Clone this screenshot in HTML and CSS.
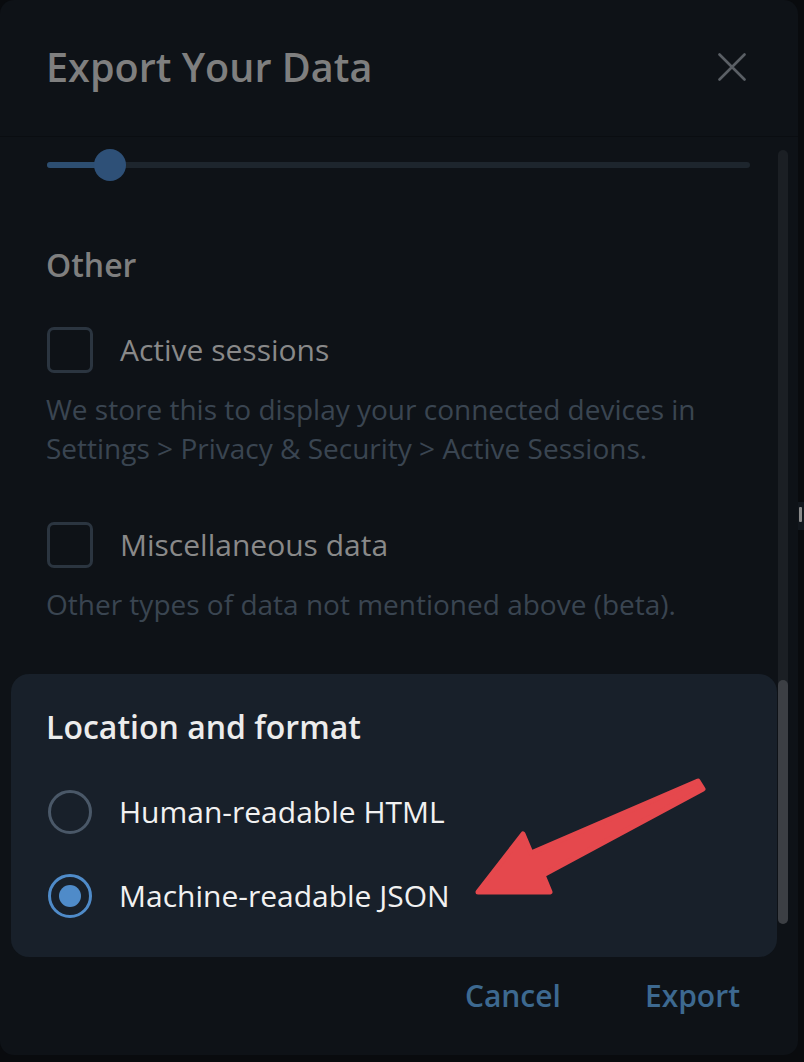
FILE: index.html
```html
<!DOCTYPE html>
<html>
<head>
<meta charset="utf-8">
<link rel="stylesheet" href="styles.css">
</head>
<body>
<div class="dialog">
  <header class="header">
    <h1 class="title">Export Your Data</h1>
    <svg class="close" width="28" height="28" viewBox="0 0 28 28"><path d="M1.5 1.5 L26.5 26.5 M26.5 1.5 L1.5 26.5" stroke="#5a5f65" stroke-width="2.6" stroke-linecap="round" fill="none"/></svg>
  </header>
  <div class="scroll">
    <div class="content">
      <div class="slider"><div class="track"><div class="fill"></div><div class="thumb"></div></div></div>
      <h2 class="section">Other</h2>
      <div class="check-row"><span class="checkbox"></span><span class="check-label">Active sessions</span></div>
      <p class="desc">We store this to display your connected devices in<br>Settings &gt; Privacy &amp; Security &gt; Active Sessions.</p>
      <div class="check-row second"><span class="checkbox"></span><span class="check-label">Miscellaneous data</span></div>
      <p class="desc">Other types of data not mentioned above (beta).</p>
      <div class="card">
        <h2 class="card-title">Location and format</h2>
        <div class="radio-row"><span class="radio"></span><span class="radio-label">Human-readable HTML</span></div>
        <div class="radio-row checked"><span class="radio"><span class="dot"></span></span><span class="radio-label">Machine-readable JSON</span></div>
      </div>
    </div>
    <div class="scrollbar"><div class="scroll-thumb"></div></div>
  </div>
  <footer class="footer">
    <span class="btn">Cancel</span>
    <span class="btn">Export</span>
  </footer>
  <svg class="arrow" width="804" height="1062" viewBox="0 0 804 1062"><polygon points="478,892 523,834 531,853 698,781 703,789 543,875 550,892" fill="#e5484d" stroke="#e5484d" stroke-width="5" stroke-linejoin="round"/></svg>
</div>
<div class="peek"><span></span></div>
</body>
</html>
```
FILE: styles.css
```css
* { box-sizing: border-box; }
html, body { margin: 0; padding: 0; }
body {
  background: #090b0e;
  width: 804px;
  height: 1062px;
  overflow: hidden;
  font-family: "Open Sans", "Noto Sans", sans-serif;
  position: relative;
}
.dialog {
  position: relative;
  width: 798px;
  height: 1055px;
  background: #0e1217;
  border-radius: 14px;
  display: flex;
  flex-direction: column;
}
.header {
  height: 137px;
  flex: none;
  border-bottom: 1px solid #0a0d11;
  display: flex;
  align-items: flex-start;
  justify-content: space-between;
  padding: 43px 52px 0 46px;
}
.title {
  margin: 0;
  font-size: 39.6px;
  line-height: 48px;
  font-weight: 600;
  color: #7f7f7f;
}
.close { margin-top: 10px; }
.scroll { position: relative; flex: none; }
.slider { padding: 12px 48px 0 47px; height: 44px; }
.track {
  position: relative;
  height: 6px;
  margin-top: 13px;
  background: #1d252d;
  border-radius: 3px;
}
.fill {
  position: absolute;
  left: 0; top: 0;
  width: 63px; height: 6px;
  background: #2d4e71;
  border-radius: 3px;
}
.thumb {
  position: absolute;
  left: 47px; top: -13px;
  width: 32px; height: 32px;
  border-radius: 50%;
  background: #2e5077;
}
.section {
  margin: 64px 0 0 46px;
  font-size: 32px;
  line-height: 40px;
  font-weight: 600;
  color: #7f7f7f;
}
.check-row {
  display: flex;
  align-items: center;
  margin: 42px 0 0 47px;
  height: 46px;
}
.check-row.second { margin-top: 55px; }
.checkbox {
  width: 46px; height: 46px;
  border: 3px solid #2b3540;
  border-radius: 7px;
  flex: none;
}
.check-label {
  margin-left: 27px;
  font-size: 30px;
  line-height: 40px;
  color: #898989;
}
.desc {
  margin: 17px 0 0 46px;
  font-size: 28px;
  line-height: 38.5px;
  color: #3a4551;
}
.card {
  margin: 50px 21px 0 11px;
  background: #18202a;
  border-radius: 18px;
  padding: 33px 36px 39px 35px;
}
.card-title {
  margin: 0;
  font-size: 32px;
  line-height: 40px;
  font-weight: 600;
  color: #ececec;
}
.radio-row {
  display: flex;
  align-items: center;
  height: 44px;
  margin-top: 43px;
}
.radio-row.checked { margin-top: 40px; }
.radio {
  width: 44px; height: 44px;
  border-radius: 50%;
  border: 3px solid #4a5868;
  flex: none;
  display: flex;
  align-items: center;
  justify-content: center;
  margin-left: 2px;
}
.checked .radio { border-color: #4f8bc9; }
.dot { width: 22px; height: 22px; border-radius: 50%; background: #4f8bc9; }
.radio-label {
  margin-left: 27px;
  font-size: 30px;
  line-height: 40px;
  color: #f1f1f1;
}
.scrollbar {
  position: absolute;
  left: 778px;
  top: 13px;
  width: 10px;
  height: 774px;
  background: #1b1f24;
  border-radius: 5px;
}
.scroll-thumb {
  position: absolute;
  left: 0;
  bottom: 0;
  width: 10px;
  height: 244px;
  background: #3c3f44;
  border-radius: 5px;
}
.footer {
  display: flex;
  justify-content: flex-end;
  gap: 84px;
  padding: 19px 58px 0 0;
}
.btn {
  font-size: 30px;
  line-height: 40px;
  font-weight: 600;
  color: #3d6990;
}
.arrow { position: absolute; left: 0; top: 0; pointer-events: none; }
.peek {
  position: absolute;
  left: 798px; top: 502px;
  width: 6px; height: 28px;
  background: #12171d;
}
.peek span {
  position: absolute;
  left: 1px; top: 5px;
  width: 3px; height: 15px;
  background: #8a8a8a;
  border-radius: 1px;
}
```
